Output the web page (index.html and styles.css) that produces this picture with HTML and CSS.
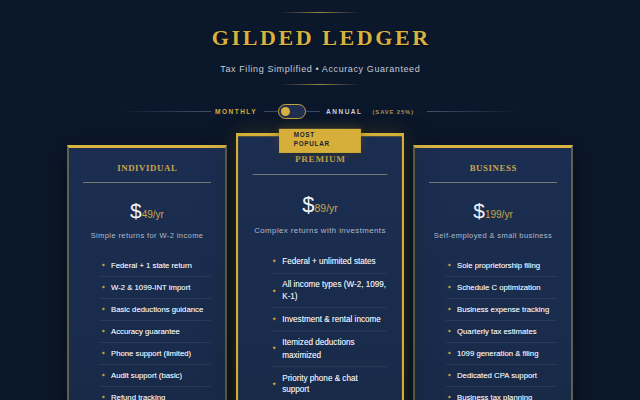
FILE: index.html
```html
<!DOCTYPE html>
<html lang="en">
<head>
<meta charset="utf-8">
<title>Gilded Ledger</title>
<link rel="stylesheet" href="styles.css">
</head>
<body>
<header class="hero">
  <div class="rule"></div>
  <h1 class="brand">GILDED LEDGER</h1>
  <p class="tagline">Tax Filing Simplified • Accuracy Guaranteed</p>
  <div class="rule rule-low"></div>
</header>

<div class="billing">
  <span class="line line-left"></span>
  <span class="opt opt-active">MONTHLY</span>
  <span class="line line-short line-a"></span>
  <span class="switch"><span class="knob"></span></span>
  <span class="line line-short line-b"></span>
  <span class="opt">ANNUAL</span>
  <span class="save">(SAVE 25%)</span>
  <span class="line line-right"></span>
</div>

<main class="plans">
  <section class="card">
    <h2 class="plan-name">INDIVIDUAL</h2>
    <div class="divider"></div>
    <div class="price"><span class="dollar">$</span><span class="amount">49/yr</span></div>
    <p class="desc">Simple returns for W-2 income</p>
    <ul class="features">
      <li><span class="bullet">✦</span><span class="ftext">Federal + 1 state return</span></li>
      <li><span class="bullet">✦</span><span class="ftext">W-2 &amp; 1099-INT import</span></li>
      <li><span class="bullet">✦</span><span class="ftext">Basic deductions guidance</span></li>
      <li><span class="bullet">✦</span><span class="ftext">Accuracy guarantee</span></li>
      <li><span class="bullet">✦</span><span class="ftext">Phone support (limited)</span></li>
      <li><span class="bullet">✦</span><span class="ftext">Audit support (basic)</span></li>
      <li><span class="bullet">✦</span><span class="ftext">Refund tracking</span></li>
    </ul>
  </section>

  <section class="card card-featured">
    <div class="badge">MOST POPULAR</div>
    <h2 class="plan-name">PREMIUM</h2>
    <div class="divider"></div>
    <div class="price"><span class="dollar">$</span><span class="amount">89/yr</span></div>
    <p class="desc">Complex returns with investments</p>
    <ul class="features">
      <li><span class="bullet">✦</span><span class="ftext">Federal + unlimited states</span></li>
      <li><span class="bullet">✦</span><span class="ftext">All income types (W-2, 1099, K-1)</span></li>
      <li><span class="bullet">✦</span><span class="ftext">Investment &amp; rental income</span></li>
      <li><span class="bullet">✦</span><span class="ftext">Itemized deductions maximized</span></li>
      <li><span class="bullet">✦</span><span class="ftext">Priority phone &amp; chat support</span></li>
      <li><span class="bullet">✦</span><span class="ftext">Full audit defense</span></li>
    </ul>
  </section>

  <section class="card">
    <h2 class="plan-name">BUSINESS</h2>
    <div class="divider"></div>
    <div class="price"><span class="dollar">$</span><span class="amount">199/yr</span></div>
    <p class="desc">Self-employed &amp; small business</p>
    <ul class="features">
      <li><span class="bullet">✦</span><span class="ftext">Sole proprietorship filing</span></li>
      <li><span class="bullet">✦</span><span class="ftext">Schedule C optimization</span></li>
      <li><span class="bullet">✦</span><span class="ftext">Business expense tracking</span></li>
      <li><span class="bullet">✦</span><span class="ftext">Quarterly tax estimates</span></li>
      <li><span class="bullet">✦</span><span class="ftext">1099 generation &amp; filing</span></li>
      <li><span class="bullet">✦</span><span class="ftext">Dedicated CPA support</span></li>
      <li><span class="bullet">✦</span><span class="ftext">Business tax planning</span></li>
    </ul>
  </section>
</main>
</body>
</html>
```

FILE: styles.css
```css
* { box-sizing: border-box; }

html, body {
  margin: 0;
  padding: 0;
  height: 100%;
  overflow: hidden;
}

body {
  background: #0b172a;
  font-family: "Liberation Sans", Arial, sans-serif;
  color: #dfe4ee;
}

.hero {
  display: flex;
  flex-direction: column;
  align-items: center;
  padding-top: 12px;
}

.rule {
  width: 80px;
  height: 1px;
  background: linear-gradient(90deg, rgba(201,168,76,0), rgba(201,168,76,0.75), rgba(201,168,76,0));
}

.brand {
  margin: 12px 0 0;
  font-family: "Liberation Serif", "Times New Roman", serif;
  font-weight: 700;
  font-size: 22px;
  line-height: 26px;
  letter-spacing: 2.6px;
  padding-left: 2.6px;
  color: #d8b23e;
  text-shadow: 0 1px 2px rgba(0,0,0,0.6);
}

.tagline {
  margin: 12px 0 0;
  font-size: 9px;
  line-height: 12px;
  letter-spacing: 0.6px;
  padding-left: 0.6px;
  color: #c3cbd8;
}

.rule-low { margin-top: 9px; }

.billing {
  display: flex;
  align-items: center;
  justify-content: center;
  margin-top: 19px;
  height: 15px;
}

.line {
  display: block;
  height: 1px;
}

.line-left {
  width: 90px;
  margin-right: 4px;
  background: linear-gradient(90deg, rgba(70,88,118,0), rgba(70,88,118,0.9));
}

.line-right {
  width: 92px;
  margin-left: 13px;
  background: linear-gradient(90deg, rgba(70,88,118,0.9), rgba(70,88,118,0));
}

.line-short {
  width: 14px;
  background: #3a4862;
}

.line-a { margin-left: 7px; }
.line-b { margin-right: 6px; }

.opt {
  font-size: 6.5px;
  font-weight: 700;
  letter-spacing: 1.5px;
  color: #c9cfdb;
}

.opt-active { color: #d6ad3c; }

.save {
  margin-left: 10px;
  font-size: 5.8px;
  font-weight: 700;
  letter-spacing: 0.9px;
  color: #a99257;
}

.switch {
  display: flex;
  align-items: center;
  width: 28px;
  height: 15px;
  border: 1.5px solid #c9a43a;
  border-radius: 8px;
  background: #1f3050;
  padding-left: 2px;
}

.knob {
  width: 9px;
  height: 9px;
  border-radius: 50%;
  background: #d9b23e;
}

.plans {
  display: flex;
  justify-content: center;
  align-items: flex-start;
  gap: 13px;
  margin-top: 26px;
}

.card {
  position: relative;
  width: 160px;
  flex: none;
  padding: 14px 14px 20px;
  border: 2px solid #5e6152;
  border-top: 3px solid #d9b443;
  background: linear-gradient(180deg, #1b2e51 0%, #1a2c4c 60%, #182947 100%);
  box-shadow: 0 8px 24px rgba(0,0,0,0.5);
}

.card-featured {
  margin-top: -12px;
  padding-top: 16px;
  border: 2px solid #d4af37;
  border-top-width: 3px;
  transform: scale(1.05);
  transform-origin: top center;
  box-shadow: 0 0 18px rgba(212,175,55,0.18), 0 8px 24px rgba(0,0,0,0.5);
  z-index: 1;
}

.badge {
  position: absolute;
  top: -7.5px;
  left: 50%;
  margin-left: -39px;
  width: 78px;
  height: 23px;
  padding: 2.4px 14px 0;
  background: #d5af39;
  color: #1a2236;
  font-size: 6px;
  font-weight: 700;
  letter-spacing: 0.7px;
  line-height: 8.6px;
  box-shadow: 0 2px 8px rgba(0,0,0,0.35), 0 0 10px rgba(212,175,55,0.25);
}

.plan-name {
  margin: 0;
  text-align: center;
  font-family: "Liberation Serif", "Times New Roman", serif;
  font-weight: 700;
  font-size: 8.8px;
  line-height: 12px;
  letter-spacing: 0.6px;
  padding-left: 0.6px;
  color: #c8a64c;
}

.divider {
  margin-top: 8px;
  height: 1px;
  background: rgba(190,180,140,0.55);
}

.price {
  margin-top: 16px;
  text-align: center;
  line-height: 24px;
  height: 24px;
  white-space: nowrap;
}

.dollar {
  font-size: 21px;
  color: #f1f3f7;
}

.amount {
  font-size: 10px;
  color: #c8a64c;
}

.desc {
  margin: 8px 0 0;
  text-align: center;
  font-size: 7.5px;
  line-height: 10px;
  letter-spacing: 0.4px;
  color: #b0bacb;
  white-space: nowrap;
}

.features {
  list-style: none;
  margin: 14px 0 0;
  padding: 0 0.5px 0 17px;
}

.features li {
  display: flex;
  align-items: center;
  gap: 4px;
  padding: 5px 0 4.6px 1px;
  border-bottom: 1px solid rgba(255,255,255,0.07);
}

.bullet {
  flex: none;
  width: 6px;
  font-family: "DejaVu Sans", sans-serif;
  font-size: 5.5px;
  line-height: 11.4px;
  color: #dcb443;
}

.ftext {
  font-size: 7.75px;
  line-height: 11.4px;
  color: #e3e7ef;
  text-shadow: 0 0 0.6px rgba(235,240,248,0.7);
}
```
